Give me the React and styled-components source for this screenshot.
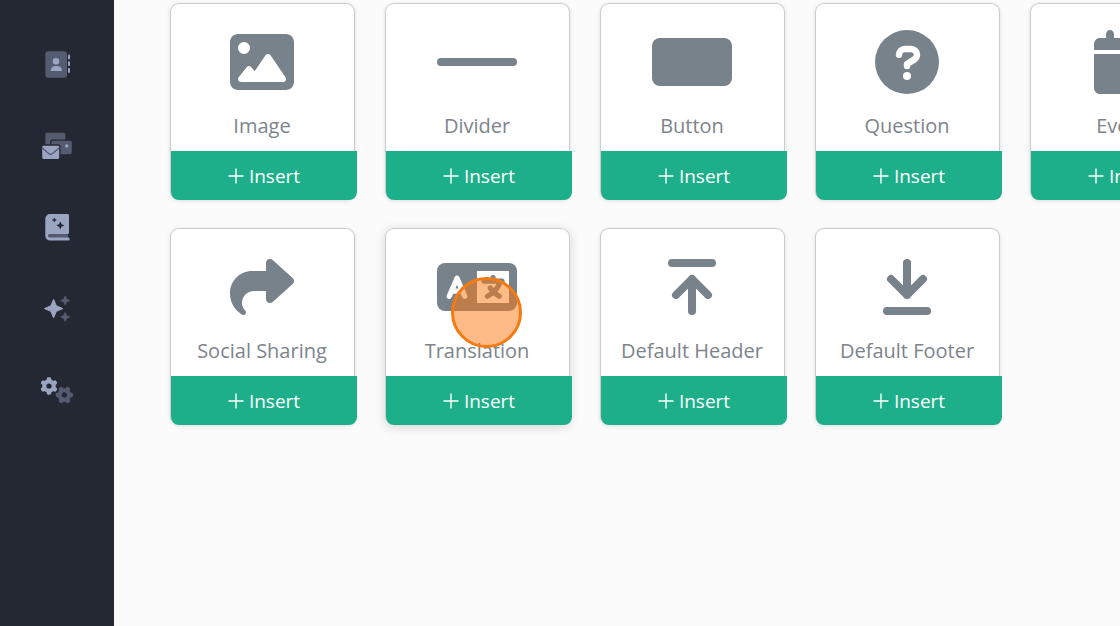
import styled, { createGlobalStyle } from 'styled-components';
import { FaCalendar, FaImage, FaShare } from 'react-icons/fa6';

const LIGHT = '#9ba4c1';
const DIM = '#555b70';
const DARK = '#242833';

const star = (x, y, r) => {
  const k = r * 0.3;
  return `M${x} ${y - r}L${x + k} ${y - k}L${x + r} ${y}L${x + k} ${y + k}L${x} ${y + r}L${x - k} ${y + k}L${x - r} ${y}L${x - k} ${y - k}Z`;
};

const Gear = ({ x, y, turn, color }) => (
  <g transform={`translate(${x} ${y}) rotate(${turn})`} fill={color}>
    <circle r="6.8" />
    {[0, 60, 120].map((deg) => (
      <rect
        key={deg}
        x="-2.2"
        y="-8.7"
        width="4.4"
        height="17.4"
        rx="1.4"
        transform={`rotate(${deg})`}
      />
    ))}
    <circle r="2.6" fill={DARK} />
  </g>
);

const ContactsIcon = () => (
  <svg viewBox="0 0 40 40" aria-hidden="true">
    <rect x="8.3" y="8.3" width="21.7" height="26.4" rx="3" fill={DIM} />
    <circle cx="19" cy="18.2" r="3.3" fill={LIGHT} />
    <path d="M13.7 28a4.6 4.6 0 0 1 4.6-4.9h2.1a4.6 4.6 0 0 1 4.6 4.9z" fill={LIGHT} />
    <rect x="31" y="11.6" width="2" height="4.8" rx="0.8" fill={LIGHT} />
    <rect x="31" y="18.2" width="2" height="4.9" rx="0.8" fill={LIGHT} />
    <rect x="31" y="25" width="2" height="4.9" rx="0.8" fill={LIGHT} />
  </svg>
);

const CampaignsIcon = () => (
  <svg viewBox="0 0 40 40" aria-hidden="true">
    <rect x="8.3" y="7.8" width="20" height="14" rx="1.6" fill={DIM} />
    <rect x="13.1" y="14.4" width="24" height="16" rx="2.6" fill={DARK} />
    <rect x="14.4" y="15.8" width="20.4" height="13.4" rx="1.6" fill={DIM} />
    <circle cx="29.7" cy="21" r="1.7" fill={LIGHT} />
    <rect x="3.8" y="19.3" width="19.8" height="16.4" rx="2.6" fill={DARK} />
    <rect x="5.2" y="20.7" width="17" height="13.3" rx="1.4" fill={LIGHT} />
    <path d="M5.2 23l7.2 5.9a2 2 0 0 0 2.4 0L22.2 23" fill="none" stroke={DIM} strokeWidth="1.3" />
  </svg>
);

const LibraryIcon = () => (
  <svg viewBox="0 0 40 40" aria-hidden="true">
    <path
      d="M13 7h17.6a1.4 1.4 0 0 1 1.4 1.4v17.2a1.4 1.4 0 0 1-1 1.4v3.6h.2a1.5 1.5 0 0 1 0 3H13a4.7 4.7 0 0 1-4.7-4.7V11.7A4.7 4.7 0 0 1 13 7z"
      fill={LIGHT}
    />
    <path d="M12.6 27H31v3.4H12.6a1.7 1.7 0 0 1 0-3.4z" fill={DIM} />
    <path d={star(23.3, 18.4, 3.5)} fill={DARK} stroke={DARK} strokeWidth="0.5" />
    <path d={star(17.3, 13, 2.1)} fill={DARK} stroke={DARK} strokeWidth="0.4" />
  </svg>
);

const SparklesIcon = () => (
  <svg viewBox="0 0 40 40" aria-hidden="true" strokeLinejoin="round">
    <path d={star(16.6, 19.6, 9.2)} fill={LIGHT} stroke={LIGHT} strokeWidth="1" />
    <path d={star(28.2, 11.6, 4.6)} fill={DIM} stroke={DIM} strokeWidth="0.8" />
    <path d={star(28.2, 28, 4.6)} fill={DIM} stroke={DIM} strokeWidth="0.8" />
  </svg>
);

const SettingsIcon = () => (
  <svg viewBox="0 0 40 40" aria-hidden="true">
    <Gear x={12} y={15} turn={0} color={LIGHT} />
    <Gear x={27.4} y={24} turn={30} color={DIM} />
  </svg>
);

const DividerIcon = () => (
  <svg viewBox="0 0 640 512" width="80" height="64" aria-hidden="true">
    <rect y="224" width="640" height="64" rx="32" fill="currentColor" />
  </svg>
);

const ButtonIcon = () => (
  <svg viewBox="0 0 640 512" width="80" height="64" aria-hidden="true">
    <rect y="64" width="640" height="384" rx="64" fill="currentColor" />
  </svg>
);

const QuestionIcon = () => (
  <svg viewBox="0 0 512 512" width="64" height="64" aria-hidden="true">
    <circle cx="256" cy="256" r="256" fill="currentColor" />
    <path
      d="M192 198a46 46 0 0 1 46-46h50a47 47 0 0 1 48 46 47 47 0 0 1-23 39l-57 35v16"
      fill="none"
      stroke="#fff"
      strokeWidth="52"
      strokeLinecap="round"
      strokeLinejoin="round"
    />
    <circle cx="256" cy="368" r="32" fill="#fff" />
  </svg>
);

const TranslationIcon = () => (
  <svg viewBox="0 0 640 512" width="80" height="64" fill="none" aria-hidden="true">
    <rect y="64" width="640" height="384" rx="64" fill="currentColor" />
    <rect x="320" y="128" width="256" height="256" fill="#fff" />
    <g strokeWidth="42" strokeLinecap="round" strokeLinejoin="round">
      <path d="M98 330l62-144 62 144M122 288h76" stroke="#fff" />
      <path d="M448 180v28M376 208h144M506 212q-24 76-102 118M426 264q28 42 72 66" stroke="currentColor" />
    </g>
  </svg>
);

const HeaderIcon = () => (
  <svg
    viewBox="0 0 384 512"
    width="48"
    height="64"
    fill="none"
    stroke="currentColor"
    strokeWidth="64"
    strokeLinecap="round"
    strokeLinejoin="round"
    aria-hidden="true"
  >
    <path d="M32 64h320M192 448V192M64 320l128-128 128 128" />
  </svg>
);

const FooterIcon = () => (
  <svg
    viewBox="0 0 384 512"
    width="48"
    height="64"
    fill="none"
    stroke="currentColor"
    strokeWidth="64"
    strokeLinecap="round"
    strokeLinejoin="round"
    aria-hidden="true"
  >
    <path d="M32 448h320M192 64v256M64 192l128 128 128-128" />
  </svg>
);

const PlusIcon = () => (
  <svg viewBox="0 0 16 16" width="16" height="16" stroke="currentColor" aria-hidden="true">
    <path d="M8 1v14M1 8h14" strokeWidth="1.4" strokeLinecap="round" />
  </svg>
);

const links = [
  { label: 'Contacts', icon: <ContactsIcon /> },
  { label: 'Campaigns', icon: <CampaignsIcon /> },
  { label: 'Library', icon: <LibraryIcon /> },
  { label: 'Assistant', icon: <SparklesIcon /> },
  { label: 'Settings', icon: <SettingsIcon /> },
];

const blocks = [
  { name: 'Image', icon: <FaImage size={64} /> },
  { name: 'Divider', icon: <DividerIcon /> },
  { name: 'Button', icon: <ButtonIcon /> },
  { name: 'Question', icon: <QuestionIcon /> },
  { name: 'Event', icon: <FaCalendar size={64} /> },
  { name: 'Social Sharing', icon: <FaShare size={64} /> },
  { name: 'Translation', icon: <TranslationIcon />, active: true },
  { name: 'Default Header', icon: <HeaderIcon /> },
  { name: 'Default Footer', icon: <FooterIcon /> },
];

const App = () => {
  return (
    <Page>
      <GlobalStyle />
      <Sidebar>
        {links.map((link) => (
          <SidebarLink key={link.label} href="#" aria-label={link.label}>
            {link.icon}
          </SidebarLink>
        ))}
      </Sidebar>
      <Content>
        <BlockGrid>
          {blocks.map((block) => (
            <Card key={block.name} $active={block.active}>
              <IconBox>{block.icon}</IconBox>
              <CardTitle>{block.name}</CardTitle>
              <InsertButton type="button">
                <PlusIcon />
                Insert
              </InsertButton>
              {block.active && <ClickMarker />}
            </Card>
          ))}
        </BlockGrid>
      </Content>
    </Page>
  );
};

export default App;

const GlobalStyle = createGlobalStyle`
  * {
    box-sizing: border-box;
  }

  body {
    margin: 0;
    background: #fbfbfb;
    font-family: 'Open Sans', 'Noto Sans', sans-serif;
  }
`;

const Page = styled.div`
  display: flex;
  min-height: 100vh;
`;

const Sidebar = styled.nav`
  display: flex;
  flex-direction: column;
  align-items: center;
  flex: 0 0 114px;
  gap: 42px;
  padding-top: 43px;
  background: ${DARK};
`;

const SidebarLink = styled.a`
  display: block;
  width: 40px;
  height: 40px;

  svg {
    display: block;
  }
`;

const Content = styled.main`
  flex: 1;
  min-width: 0;
  overflow: hidden;
  padding: 3px 0 28px 56px;
`;

const BlockGrid = styled.div`
  display: grid;
  grid-template-columns: repeat(5, 185px);
  gap: 28px 30px;
`;

const Card = styled.article`
  position: relative;
  display: flex;
  flex-direction: column;
  align-items: center;
  padding: 26px 1px 0 0;
  border: 1px solid #cbcccd;
  border-bottom: 0;
  border-radius: 9px;
  background: #fff;
  box-shadow: ${({ $active }) =>
    $active ? '0 2px 12px rgba(0, 0, 0, 0.16)' : '0 1px 4px rgba(0, 0, 0, 0.12)'};
`;

const IconBox = styled.div`
  display: flex;
  align-items: center;
  justify-content: center;
  height: 64px;
  color: #78828a;
`;

const CardTitle = styled.h3`
  margin: 18px 0 11px;
  color: #7d848b;
  font-size: 20px;
  font-weight: 400;
  line-height: 28px;
  white-space: nowrap;
`;

const InsertButton = styled.button`
  display: flex;
  align-items: center;
  justify-content: center;
  align-self: flex-start;
  gap: 5px;
  width: calc(100% + 4px);
  height: 49px;
  padding: 0;
  border: 0;
  border-radius: 0 0 8px 8px;
  background: #1caf89;
  color: #fff;
  font-family: inherit;
  font-size: 19px;
  line-height: 28px;
  cursor: pointer;
`;

const ClickMarker = styled.span`
  position: absolute;
  top: 48px;
  left: 65px;
  width: 71px;
  height: 71px;
  border: 3px solid #f47b12;
  border-radius: 50%;
  background: rgba(255, 120, 16, 0.5);
  pointer-events: none;
`;
